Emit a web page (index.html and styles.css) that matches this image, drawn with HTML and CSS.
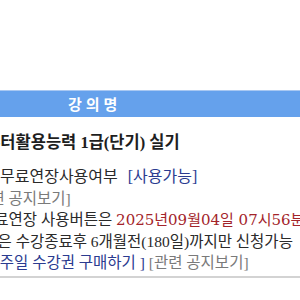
FILE: index.html
```html
<!DOCTYPE html>
<html lang="ko">
<head>
  <meta charset="UTF-8">
  <meta name="viewport" content="width=device-width, initial-scale=1.0">
  <title>강의명</title>
  <link rel="stylesheet" href="styles.css">
</head>
<body>
  <div class="page">
    <div class="title-bar">강의명</div>
    <div class="course-name">컴퓨터활용능력 1급(단기) 실기</div>
    <div class="row row-free">무료연장사용여부 <span class="link-blue status">[사용가능]</span></div>
    <div class="row row-notice"><span class="link-gray">[관련 공지보기]</span></div>
    <div class="row row-date">무료연장 사용버튼은 <span class="date">2025년09월04일 07시56분</span>까지</div>
    <div class="row row-apply">연장은 수강종료후 6개월전(180일)까지만 신청가능</div>
    <div class="row row-buy"><span class="link-blue">[ 1주일 수강권 구매하기 ]</span> <span class="link-gray">[관련 공지보기]</span></div>
    <div class="rule"></div>
  </div>
</body>
</html>
```

FILE: styles.css
```css
html, body {
  margin: 0;
  background: #fff;
}
body {
  width: 300px;
  height: 300px;
  overflow: hidden;
  font-family: "Liberation Serif", "Noto Sans CJK KR", serif;
  color: #2a2a2a;
}
.page {
  padding-top: 90px;
}
.title-bar {
  height: 26px;
  line-height: 26px;
  border-top: 1px solid #a9c8f2;
  background-color: #65a1ec;
  color: #fff;
  font-family: "Noto Sans CJK KR", sans-serif;
  font-weight: bold;
  font-size: 15px;
  letter-spacing: 4px;
  padding-left: 68px;
}
.course-name {
  margin-top: 15px;
  margin-left: -30px;
  font-size: 16.5px;
  font-weight: bold;
  line-height: 22px;
  white-space: nowrap;
  color: #1e1e1e;
}
.row {
  font-size: 15.5px;
  line-height: 21px;
  white-space: nowrap;
}
.row-free {
  margin-top: 12px;
  font-size: 16px;
  line-height: 22px;
}
.status {
  margin-left: 6px;
}
.row-notice {
  margin-left: -29px;
}
.row-date {
  margin-left: -20px;
}
.date {
  color: #a3242a;
  font-family: "DejaVu Serif", "Noto Sans CJK KR", serif;
  font-size: 15px;
}
.row-apply {
  margin-left: -31px;
}
.row-buy {
  margin-left: -17px;
}
.link-blue {
  color: #2b3b90;
}
.link-gray {
  color: #7a7a7a;
}
.rule {
  margin-top: 3px;
  height: 2px;
  background-color: #d3d3d3;
}
```
